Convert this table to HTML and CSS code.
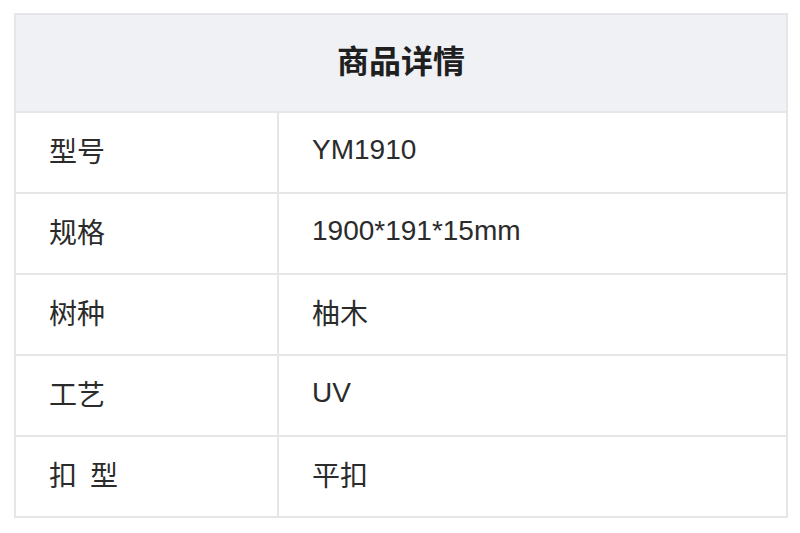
FILE: index.html
```html
<!DOCTYPE html>
<html lang="zh-CN">
<head>
<meta charset="utf-8">
<title>商品详情</title>
<link rel="stylesheet" href="styles.css">
</head>
<body>
<div class="spec">
  <div class="spec-head">商品详情</div>
  <div class="cell label">型号</div>
  <div class="cell value">YM1910</div>
  <div class="cell label">规格</div>
  <div class="cell value">1900*191*15mm</div>
  <div class="cell label">树种</div>
  <div class="cell value">柚木</div>
  <div class="cell label">工艺</div>
  <div class="cell value">UV</div>
  <div class="cell label">扣<span class="gap"></span>型</div>
  <div class="cell value">平扣</div>
</div>
</body>
</html>
```

FILE: styles.css
```css
html, body {
  margin: 0;
  padding: 0;
  background: #ffffff;
}

body {
  font-family: "Liberation Sans", "Noto Sans CJK SC", sans-serif;
  color: #2b2b2b;
}

.spec {
  margin: 13px 0 0 14px;
  width: 774px;
  box-sizing: border-box;
  padding: 2px;
  background: #e6e6e8;
  display: grid;
  grid-template-columns: 261px 1fr;
  grid-template-rows: 96px repeat(5, 79px);
  gap: 2px;
}

.spec-head {
  grid-column: 1 / span 2;
  background: #f0f1f5;
  display: flex;
  align-items: center;
  justify-content: center;
  padding-bottom: 8px;
  font-size: 32px;
  font-weight: 700;
  color: #1f1f1f;
}

.cell {
  background: #ffffff;
  display: flex;
  align-items: center;
  padding-left: 33px;
  padding-bottom: 5px;
  font-size: 28px;
  white-space: pre;
}

.gap {
  display: inline-block;
  width: 13px;
}
```
